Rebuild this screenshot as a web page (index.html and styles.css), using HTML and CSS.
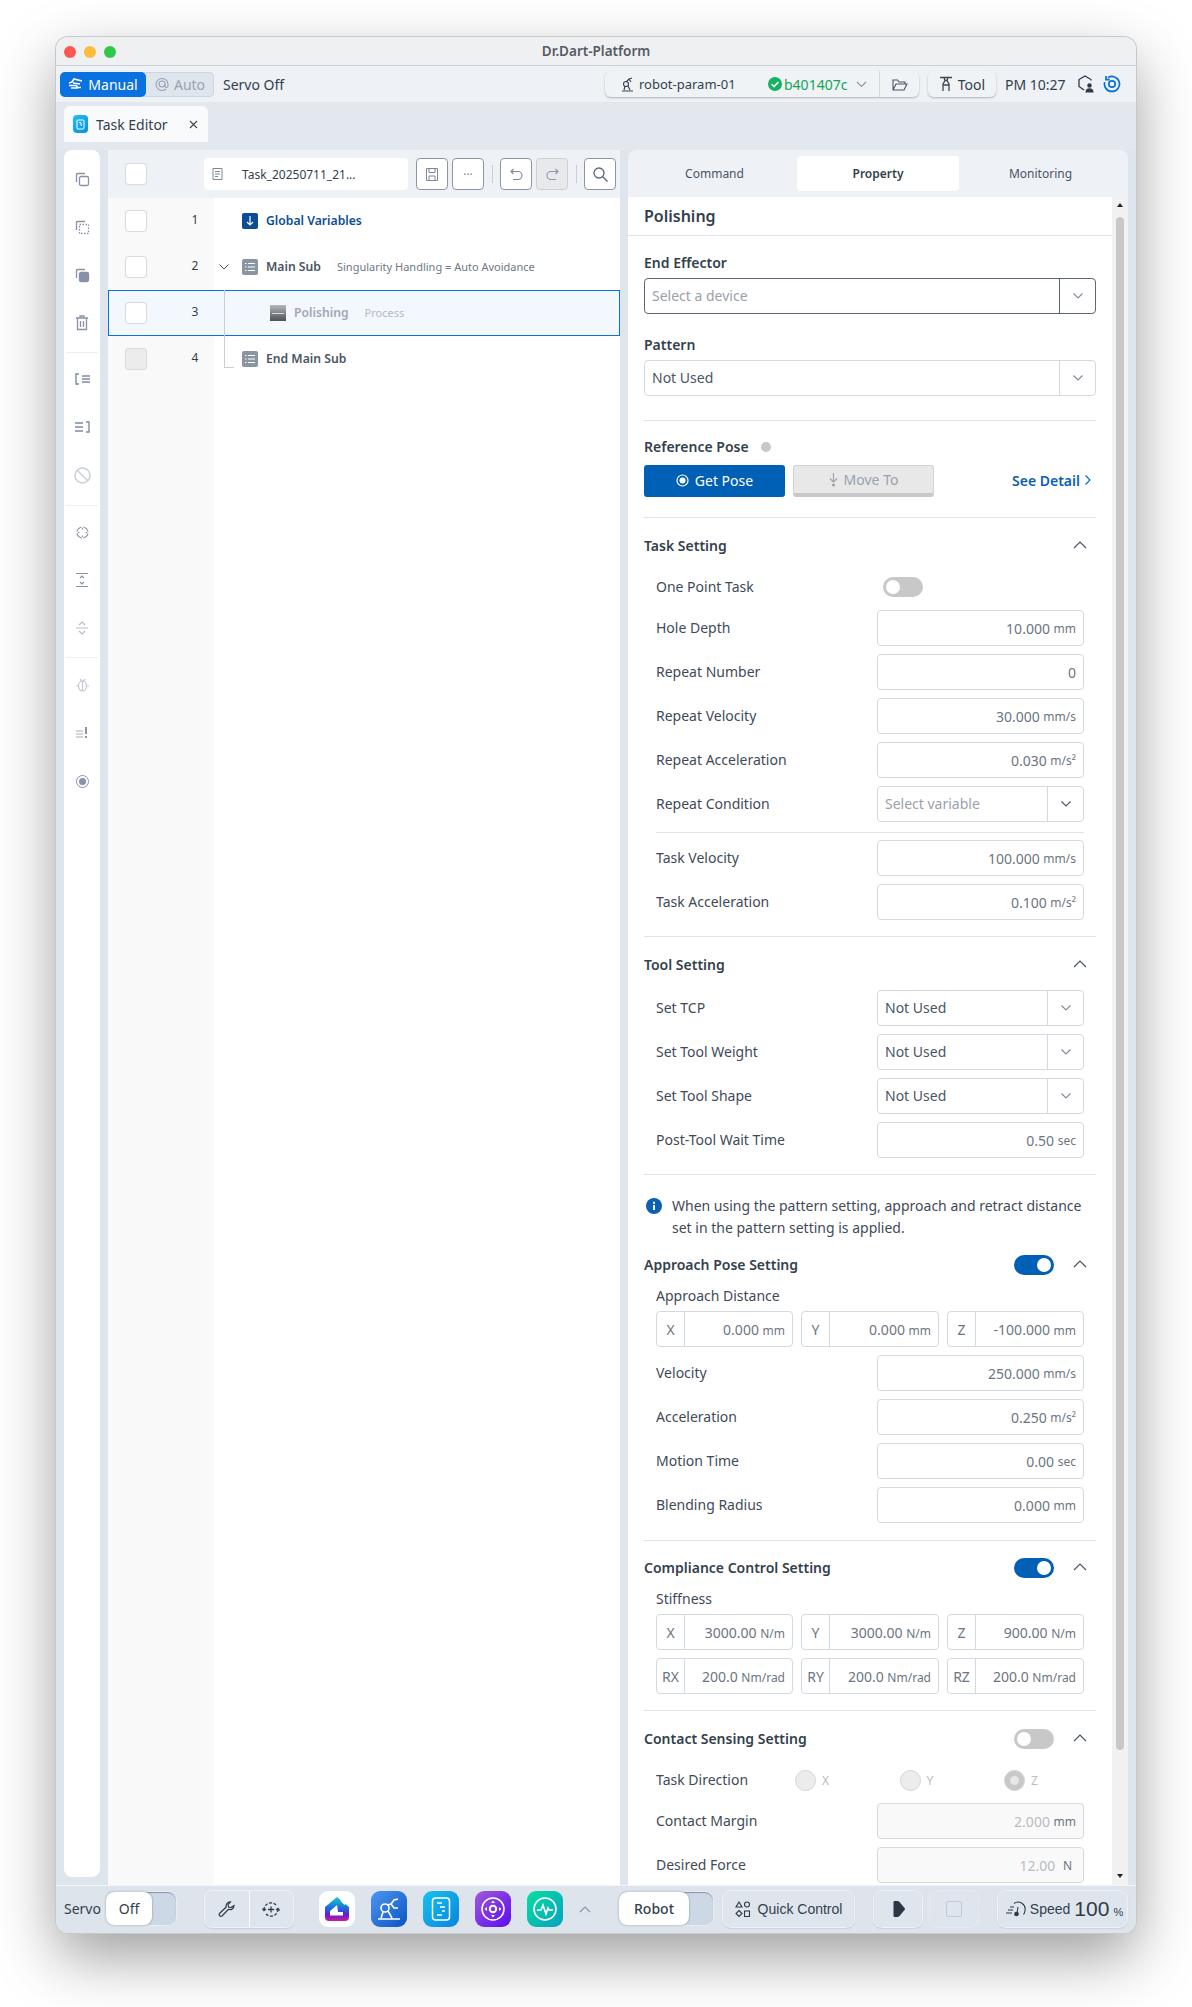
FILE: index.html
```html
<!DOCTYPE html>
<html lang="en">
<head>
  <meta charset="UTF-8">
  <title>Dr.Dart-Platform</title>
  <link rel="stylesheet" href="styles.css">
</head>
<body>
  <div class="window">
    <div class="titlebar">
      <div class="lights"><i class="red"></i><i class="yellow"></i><i class="green"></i></div>
      <span>Dr.Dart-Platform</span>
    </div>

    <div class="topbar">
      <div class="mode">
        <div class="mode-on">
          <svg width="16" height="12" viewBox="0 0 16 12" fill="none" stroke="#fff" stroke-width="1.600"><path d="M1 5l3-1 2-3 8 2M1 7.500h7l2 2h3M5 5l7 1M3 10h7"/></svg>
          Manual
        </div>
        <div class="mode-off">
          <svg width="14" height="14" viewBox="0 0 14 14" fill="none" stroke="#9aa5b4" stroke-width="1.100"><path d="M11 12a6 6 0 1 1 2-5v2a1.500 1.500 0 0 1-3 0V7"/><circle cx="7" cy="7" r="3"/></svg>
          Auto
        </div>
      </div>
      <span class="servo-state">Servo Off</span>

      <div class="robot-select">
        <div class="robot-name">
          <svg width="14" height="16" viewBox="0 0 14 16" fill="none" stroke="#3b4654" stroke-width="1.200"><circle cx="5" cy="8" r="2.500"/><path d="M5 6l3-3 3-1M8 3l2 3M4 10l-1 4M7 10l2 4M1 15h11"/></svg>
          robot-param-01
        </div>
        <div class="robot-version">
          <svg width="14" height="14" viewBox="0 0 14 14"><circle cx="7" cy="7" r="7" fill="#13b35f"/><path d="M3.600 7.200l2.400 2.400 4.400-4.600" fill="none" stroke="#fff" stroke-width="1.600"/></svg>
          b401407c
          <svg class="ver-caret" width="11" height="7" viewBox="0 0 11 7" fill="none" stroke="#8b95a3" stroke-width="1.100"><path d="M1 1l4.500 4.500L10 1"/></svg>
        </div>
        <div class="robot-folder">
          <svg width="16" height="13" viewBox="0 0 16 13" fill="none" stroke="#4a5563" stroke-width="1.100"><path d="M1 11V2h4.500l1.500 2h6v2M1 12h11l3-6H4l-3 6z"/></svg>
        </div>
      </div>
      <div class="tool-btn">
        <svg width="14" height="16" viewBox="0 0 14 16" fill="none" stroke="#3b4654" stroke-width="1.300"><path d="M1 1.500h12M5 1.500l1 3h2l1-3M6 4.500L4 8v7M8 4.500L10 8v7M4 9h6"/></svg>
        Tool
      </div>
      <span class="clock">PM 10:27</span>
      <svg class="status-shield" width="18" height="18" viewBox="0 0 18 18" fill="none" stroke="#2f3a47" stroke-width="1.300"><path d="M14 5.500V4.500L8 1 2 4.500v7L7 15"/><circle cx="12.500" cy="10.500" r="2.200" fill="#2f3a47" stroke="none"/><path d="M8.500 17.500c0-3 1.500-4.200 4-4.200s4 1.200 4 4.200z" fill="#2f3a47" stroke="none"/></svg>
      <svg width="18" height="18" viewBox="0 0 18 18" fill="none" stroke="#0a6fd8" stroke-width="1.700"><path d="M5 2.600a7.500 7.500 0 1 1-3.300 4.500M3 1v3.700h3.700"/><circle cx="9" cy="9" r="3.200"/></svg>
    </div>

    <div class="tabrow">
      <div class="doc-tab">
        <span class="doc-tab-icon">
          <svg width="9" height="11" viewBox="0 0 9 11" fill="none" stroke="#fff" stroke-width="1"><rect x="1" y="1" width="7" height="9" rx="1"/><path d="M3 3.500h2v3h1"/></svg>
        </span>
        <span class="doc-tab-name">Task Editor</span>
        <svg width="9" height="9" viewBox="0 0 9 9" stroke="#3b4654" stroke-width="1.100"><path d="M1 1l7 7M8 1L1 8"/></svg>
      </div>
    </div>

    <div class="workspace">
      <div class="sidebar">
        <div class="side-group first">
          <div class="side-icon"><svg width="15" height="15" viewBox="0 0 15 15" fill="none" stroke="#8791a8" stroke-width="1.300"><path d="M1.500 10V2.500a1 1 0 0 1 1-1H10"/><rect x="4.500" y="4.500" width="9" height="9" rx="1.500"/></svg></div>
          <div class="side-icon"><svg width="15" height="15" viewBox="0 0 15 15" fill="none" stroke="#8791a8" stroke-width="1.300"><path d="M1.500 10V2.500a1 1 0 0 1 1-1H10"/><rect x="4.500" y="4.500" width="9" height="9" stroke-dasharray="1.500 1.500"/></svg></div>
          <div class="side-icon"><svg width="15" height="15" viewBox="0 0 15 15" fill="none" stroke="#8791a8" stroke-width="1.300"><path d="M1.500 10V2.500a1 1 0 0 1 1-1H10"/><rect x="4.500" y="4.500" width="9" height="9" rx="1.500" fill="#8791a8"/></svg></div>
          <div class="side-icon"><svg width="14" height="16" viewBox="0 0 14 16" fill="none" stroke="#8791a8" stroke-width="1.300"><path d="M1 3h12M5 3V1h4v2M2.500 3v11.500h9V3M5.500 6v6M8.500 6v6"/></svg></div>
        </div>
        <div class="side-group second">
          <div class="side-icon"><svg width="15" height="12" viewBox="0 0 15 12" fill="none" stroke="#7f89a6" stroke-width="1.400"><path d="M4 1H1v10h3M7 3h8M7 6h8M7 9h8"/></svg></div>
          <div class="side-icon"><svg width="15" height="12" viewBox="0 0 15 12" fill="none" stroke="#7f89a6" stroke-width="1.400"><path d="M0 2h8M0 6h8M0 10h8M11 1h3v10h-3"/></svg></div>
          <div class="side-icon"><svg width="17" height="17" viewBox="0 0 17 17" fill="none" stroke="#c9cfdb" stroke-width="1.500"><circle cx="8.500" cy="8.500" r="7.500"/><path d="M3.200 3.200l10.600 10.600"/></svg></div>
        </div>
        <div class="side-group third">
          <div class="side-icon"><svg width="13" height="13" viewBox="0 0 13 13" fill="none" stroke="#8791a8" stroke-width="1.100"><circle cx="6.500" cy="6.500" r="5.500"/><path d="M6.500 0v3M6.500 10v3M0 6.500h3M10 6.500h3" stroke="#fff" stroke-width="1.400"/><path d="M6.500 2v1.500M6.500 9.500V11M2 6.500h1.500M9.500 6.500H11"/></svg></div>
          <div class="side-icon"><svg width="12" height="14" viewBox="0 0 12 14" fill="none" stroke="#8791a8" stroke-width="1.100"><path d="M0 .5h12M0 13.500h12M4 5l2-2 2 2M4 9l2 2 2-2"/></svg></div>
          <div class="side-icon"><svg width="12" height="14" viewBox="0 0 12 14" fill="none" stroke="#b5bcca" stroke-width="1.100"><path d="M0 7h12M3 4l3-3 3 3M3 10l3 3 3-3"/></svg></div>
        </div>
        <div class="side-group fourth">
          <div class="side-icon"><svg width="13" height="14" viewBox="0 0 13 14" fill="none" stroke="#c4cad6" stroke-width="1.200"><ellipse cx="6.500" cy="8" rx="4" ry="5"/><path d="M4 1l2.500 3L9 1M6.500 4v9M0 8h2.500M10.500 8H13"/></svg></div>
          <div class="side-icon"><svg width="12" height="12" viewBox="0 0 12 12" fill="none" stroke="#a4acbc" stroke-width="1.200"><path d="M0 4h7M0 7h7M0 10h7"/><path d="M10 0v7M10 9v2" stroke="#7f89a6" stroke-width="1.800"/></svg></div>
          <div class="side-icon"><svg width="13" height="13" viewBox="0 0 13 13"><circle cx="6.500" cy="6.500" r="6" fill="none" stroke="#8791a8"/><circle cx="6.500" cy="6.500" r="3.500" fill="#8791a8"/></svg></div>
        </div>
      </div>

      <div class="tree">
        <div class="tree-head">
          <div class="check-col"><span class="check"></span></div>
          <div class="file-field">
            <svg width="11" height="12" viewBox="0 0 11 12" fill="none" stroke="#7d8897" stroke-width="1"><path d="M1 .5h9v11H1zM3 3.500h5M3 6h5M3 8.500h3"/></svg>
            <span>Task_20250711_21...</span>
          </div>
          <span class="tool"><svg width="12" height="13" viewBox="0 0 12 13" fill="none" stroke="#7d8897" stroke-width="1"><path d="M.5.5h11v12H.5zM3 .5v4h6v-4M3 12.500V8h6v4.500"/></svg></span>
          <span class="tool dots">···</span>
          <i class="tool-sep"></i>
          <span class="tool"><svg width="13" height="13" viewBox="0 0 13 13" fill="none" stroke="#7d8897" stroke-width="1.100"><path d="M3.500 1L1 3.500 3.500 6M1 3.500h7a4 4 0 0 1 0 8H3"/></svg></span>
          <span class="tool is-off"><svg width="13" height="13" viewBox="0 0 13 13" fill="none" stroke="#8d97a5" stroke-width="1.100"><path d="M9.500 1L12 3.500 9.500 6M12 3.500H5a4 4 0 0 0 0 8h5"/></svg></span>
          <i class="tool-sep"></i>
          <span class="tool"><svg width="15" height="15" viewBox="0 0 15 15" fill="none" stroke="#5b6676" stroke-width="1.300"><circle cx="6" cy="6" r="5"/><path d="M9.800 9.800L14.500 14.500"/></svg></span>
        </div>

        <div class="tree-body">
          <div class="tree-row">
            <div class="check-col"><span class="check"></span><b class="num">1</b></div>
            <div class="step step-top">
              <span class="step-icon blue"><svg width="8" height="10" viewBox="0 0 8 10" fill="none" stroke="#fff" stroke-width="1.200"><path d="M4 0v9M1 6l3 3 3-3"/></svg></span>
              <span class="step-name global">Global Variables</span>
            </div>
          </div>
          <div class="tree-row">
            <div class="check-col"><span class="check"></span><b class="num">2</b></div>
            <div class="step step-top">
              <svg class="step-caret" width="10" height="6" viewBox="0 0 10 6" fill="none" stroke="#4a5563" stroke-width="1"><path d="M.5.5L5 5 9.500.5"/></svg>
              <span class="step-icon grey"><svg width="10" height="10" viewBox="0 0 10 10" fill="none" stroke="#fff"><path d="M0 1.500h1.500M3 1.500h7M0 5h1.500M3 5h7M0 8.500h1.500M3 8.500h7"/></svg></span>
              <span class="step-name">Main Sub</span>
              <span class="step-note">Singularity Handling = Auto Avoidance</span>
            </div>
          </div>
          <div class="tree-row is-selected">
            <div class="check-col"><span class="check"></span><b class="num">3</b></div>
            <div class="step step-child">
              <span class="step-icon process"></span>
              <span class="step-name muted">Polishing</span>
              <span class="step-note light">Process</span>
            </div>
          </div>
          <div class="tree-row">
            <div class="check-col"><span class="check off"></span><b class="num">4</b></div>
            <div class="step step-top step-end">
              <span class="step-icon grey"><svg width="10" height="10" viewBox="0 0 10 10" fill="none" stroke="#fff"><path d="M0 1.500h1.500M3 1.500h7M0 5h1.500M3 5h7M0 8.500h1.500M3 8.500h7"/></svg></span>
              <span class="step-name">End Main Sub</span>
            </div>
          </div>
          <div class="tree-rest"><div class="check-col"></div></div>
        </div>
      </div>

      <div class="panel">
        <div class="panel-tabs">
          <div class="panel-tab tab-command">Command</div>
          <div class="panel-tab active">Property</div>
          <div class="panel-tab tab-monitor">Monitoring</div>
        </div>
        <div class="panel-main">
          <div class="props">
            <h2 class="props-title">Polishing</h2>
            <div class="props-body">
              <div class="field-label first">End Effector</div>
              <div class="select strong"><span class="placeholder">Select a device</span><span class="select-btn"><svg width="10" height="6" viewBox="0 0 10 6" fill="none" stroke="#7d8897" stroke-width="1.100"><path d="M.5.5L5 5 9.500.5"/></svg></span></div>
              <div class="field-label">Pattern</div>
              <div class="select"><span>Not Used</span><span class="select-btn"><svg width="10" height="6" viewBox="0 0 10 6" fill="none" stroke="#7d8897" stroke-width="1.100"><path d="M.5.5L5 5 9.500.5"/></svg></span></div>
              <hr class="rule rule-pattern">

              <div class="pose-head">Reference Pose <i class="pose-dot"></i></div>
              <div class="pose-actions">
                <button class="btn-primary">
                  <svg width="13" height="13" viewBox="0 0 13 13"><circle cx="6.500" cy="6.500" r="5.500" fill="none" stroke="#fff" stroke-width="1.200"/><circle cx="6.500" cy="6.500" r="3" fill="#fff"/></svg>
                  Get Pose
                </button>
                <button class="btn-disabled">
                  <svg width="9" height="14" viewBox="0 0 9 14" fill="none" stroke="#98a1b0" stroke-width="1.100"><path d="M4.500 0v8M1 5.500L4.500 9 8 5.500"/><circle cx="4.500" cy="12" r="1.500" fill="#98a1b0" stroke="none"/></svg>
                  Move To
                </button>
                <a class="see-detail">See Detail <svg width="6" height="10" viewBox="0 0 6 10" fill="none" stroke="#0b5fb5" stroke-width="1.100"><path d="M.5.5L5 5 .5 9.500"/></svg></a>
              </div>
              <hr class="rule rule-pose">

              <div class="section-head head-task"><span>Task Setting</span><svg class="collapse" width="14" height="8" viewBox="0 0 14 8" fill="none" stroke="#4a5563" stroke-width="1.200"><path d="M1 7l6-6 6 6"/></svg></div>
              <div class="rows">
                <div class="row row-switch"><label>One Point Task</label><span class="switch"></span></div>
                <div class="row"><label>Hole Depth</label><div class="num-input">10.000 <small>mm</small></div></div>
                <div class="row"><label>Repeat Number</label><div class="num-input">0</div></div>
                <div class="row"><label>Repeat Velocity</label><div class="num-input">30.000 <small>mm/s</small></div></div>
                <div class="row"><label>Repeat Acceleration</label><div class="num-input">0.030 <small>m/s²</small></div></div>
                <div class="row"><label>Repeat Condition</label><div class="select short"><span class="placeholder">Select variable</span><span class="select-btn"><svg width="10" height="6" viewBox="0 0 10 6" fill="none" stroke="#4a5563" stroke-width="1.100"><path d="M.5.5L5 5 9.500.5"/></svg></span></div></div>
                <hr class="rule inner">
                <div class="row"><label>Task Velocity</label><div class="num-input">100.000 <small>mm/s</small></div></div>
                <div class="row"><label>Task Acceleration</label><div class="num-input">0.100 <small>m/s²</small></div></div>
              </div>
              <hr class="rule rule-task">

              <div class="section-head head-tool"><span>Tool Setting</span><svg class="collapse" width="14" height="8" viewBox="0 0 14 8" fill="none" stroke="#4a5563" stroke-width="1.200"><path d="M1 7l6-6 6 6"/></svg></div>
              <div class="rows">
                <div class="row"><label>Set TCP</label><div class="select short"><span>Not Used</span><span class="select-btn"><svg width="10" height="6" viewBox="0 0 10 6" fill="none" stroke="#7d8897" stroke-width="1.100"><path d="M.5.5L5 5 9.500.5"/></svg></span></div></div>
                <div class="row"><label>Set Tool Weight</label><div class="select short"><span>Not Used</span><span class="select-btn"><svg width="10" height="6" viewBox="0 0 10 6" fill="none" stroke="#7d8897" stroke-width="1.100"><path d="M.5.5L5 5 9.500.5"/></svg></span></div></div>
                <div class="row"><label>Set Tool Shape</label><div class="select short"><span>Not Used</span><span class="select-btn"><svg width="10" height="6" viewBox="0 0 10 6" fill="none" stroke="#7d8897" stroke-width="1.100"><path d="M.5.5L5 5 9.500.5"/></svg></span></div></div>
                <div class="row"><label>Post-Tool Wait Time</label><div class="num-input">0.50 <small>sec</small></div></div>
              </div>
              <hr class="rule rule-tool">

              <div class="info-note">
                <svg width="16" height="16" viewBox="0 0 16 16"><circle cx="8" cy="8" r="8" fill="#0b5fb5"/><rect x="7" y="7" width="2" height="5" fill="#fff"/><rect x="7" y="3.800" width="2" height="2" fill="#fff"/></svg>
                <p>When using the pattern setting, approach and retract distance set in the pattern setting is applied.</p>
              </div>

              <div class="section-head head-approach"><span>Approach Pose Setting</span><span class="switch on"></span><svg class="collapse" width="14" height="8" viewBox="0 0 14 8" fill="none" stroke="#4a5563" stroke-width="1.200"><path d="M1 7l6-6 6 6"/></svg></div>
              <div class="rows">
                <div class="sub-label">Approach Distance</div>
                <div class="axis-grid">
                  <div class="axis"><b>X</b><span>0.000 <small>mm</small></span></div>
                  <div class="axis"><b>Y</b><span>0.000 <small>mm</small></span></div>
                  <div class="axis"><b>Z</b><span>-100.000 <small>mm</small></span></div>
                </div>
                <div class="row"><label>Velocity</label><div class="num-input">250.000 <small>mm/s</small></div></div>
                <div class="row"><label>Acceleration</label><div class="num-input">0.250 <small>m/s²</small></div></div>
                <div class="row"><label>Motion Time</label><div class="num-input">0.00 <small>sec</small></div></div>
                <div class="row"><label>Blending Radius</label><div class="num-input">0.000 <small>mm</small></div></div>
              </div>
              <hr class="rule rule-approach">

              <div class="section-head head-compliance"><span>Compliance Control Setting</span><span class="switch on"></span><svg class="collapse" width="14" height="8" viewBox="0 0 14 8" fill="none" stroke="#4a5563" stroke-width="1.200"><path d="M1 7l6-6 6 6"/></svg></div>
              <div class="rows">
                <div class="sub-label">Stiffness</div>
                <div class="axis-grid">
                  <div class="axis"><b>X</b><span>3000.00 <small>N/m</small></span></div>
                  <div class="axis"><b>Y</b><span>3000.00 <small>N/m</small></span></div>
                  <div class="axis"><b>Z</b><span>900.00 <small>N/m</small></span></div>
                  <div class="axis"><b>RX</b><span>200.0 <small>Nm/rad</small></span></div>
                  <div class="axis"><b>RY</b><span>200.0 <small>Nm/rad</small></span></div>
                  <div class="axis"><b>RZ</b><span>200.0 <small>Nm/rad</small></span></div>
                </div>
              </div>
              <hr class="rule rule-compliance">

              <div class="section-head head-contact"><span>Contact Sensing Setting</span><span class="switch"></span><svg class="collapse" width="14" height="8" viewBox="0 0 14 8" fill="none" stroke="#4a5563" stroke-width="1.200"><path d="M1 7l6-6 6 6"/></svg></div>
              <div class="rows">
                <div class="row row-radio">
                  <label>Task Direction</label>
                  <div class="radios">
                    <span class="radio"><i></i>X</span>
                    <span class="radio"><i></i>Y</span>
                    <span class="radio"><i class="checked"></i>Z</span>
                  </div>
                </div>
                <div class="row"><label>Contact Margin</label><div class="num-input off">2.000 <small>mm</small></div></div>
                <div class="row"><label>Desired Force</label><div class="num-input off">12.00 <small class="unit-n">N</small></div></div>
              </div>
            </div>
          </div>
          <div class="scrollbar">
            <i class="arrow-up"></i>
            <div class="scroll-thumb"></div>
            <i class="arrow-down"></i>
          </div>
        </div>
      </div>
    </div>

    <div class="bottombar">
      <span class="servo-label">Servo</span>
      <div class="slide-toggle servo-toggle"><span>Off</span></div>
      <div class="btn-pair">
        <span><svg width="17" height="17" viewBox="0 0 17 17" fill="none" stroke="#2f3a47" stroke-width="1.200"><path d="M16 4.500a4 4 0 0 1-5.500 3.800L4 15a1.800 1.800 0 0 1-2.500-2.500l6.700-6.500A4 4 0 0 1 12.500 1L10 3.500l.5 2.500 2.500.5z"/></svg></span>
        <span><svg width="18" height="17" viewBox="0 0 18 17" fill="none" stroke="#2f3a47" stroke-width="1.300"><path d="M2 9a7 7 0 0 1 12-5" stroke-dasharray="3 1.500"/><path d="M16 8a7 7 0 0 1-12 5" stroke-dasharray="3 1.500"/><path d="M6 8.500h6M9 5.500v6M.5 7.500L2 9.500l2-1.500M17.500 9.500L16 7.500l-2 1.500"/></svg></span>
      </div>
      <div class="dock">
        <span class="app app-home"><svg width="26" height="26" viewBox="0 0 26 26"><defs><linearGradient id="homeFill" x1="0" y1="0" x2="0" y2="1"><stop offset="0" stop-color="#17cdc8"/><stop offset=".45" stop-color="#1a6fe0"/><stop offset=".72" stop-color="#5a22d0"/><stop offset="1" stop-color="#d2189a"/></linearGradient></defs><path d="M13 1L25 11v10a4 4 0 0 1-4 4H5a4 4 0 0 1-4-4V11z" fill="url(#homeFill)"/><path d="M13 9l-7 6v4.500h13V16H14v-.5z" fill="#fff"/><path d="M16.500 5l1.500-1.500 4 4L20.500 9z" fill="#fff"/></svg></span>
        <span class="app app-robot"><svg width="24" height="24" viewBox="0 0 24 24" fill="none" stroke="#fff" stroke-width="1.600"><circle cx="8" cy="11" r="4"/><path d="M10 8l4-1 3-4 4-1M14 7l3 4 4 0M6 15l-2 6M11 14l4 7M1 22h22"/></svg></span>
        <span class="app app-task"><svg width="20" height="24" viewBox="0 0 20 24" fill="none" stroke="#fff" stroke-width="1.500"><rect x="1.500" y="1" width="17" height="22" rx="3"/><path d="M6 6h5M9 10h5M11 14h3M6 18h5"/></svg></span>
        <span class="app app-jog"><svg width="26" height="26" viewBox="0 0 26 26" fill="none" stroke="#fff" stroke-width="1.500"><circle cx="13" cy="13" r="11"/><circle cx="13" cy="13" r="3.200" stroke-width="2"/><path d="M13 4.500l-2 2.500h4zM13 21.500l-2-2.500h4zM4.500 13l2.500-2v4zM21.500 13L19 11v4z" fill="#fff" stroke="none"/></svg></span>
        <span class="app app-monitor"><svg width="26" height="26" viewBox="0 0 26 26" fill="none" stroke="#fff" stroke-width="1.600"><circle cx="13" cy="13" r="11"/><path d="M5 14h4l2-5 3 9 2-6 1 2h4"/></svg></span>
      </div>
      <svg class="dock-caret" width="12" height="7" viewBox="0 0 12 7" fill="none" stroke="#8b95a3" stroke-width="1.200"><path d="M1 6l5-5 5 5"/></svg>
      <div class="slide-toggle robot-toggle"><span>Robot</span></div>
      <div class="bar-btn quick">
        <svg width="16" height="16" viewBox="0 0 16 16" fill="none" stroke="#2f3a47" stroke-width="1.100"><path d="M4 1l3 5H1zM4 9.500L7 12.500 4 15.500 1 12.500z"/><circle cx="12" cy="3.500" r="2.500"/><rect x="9.500" y="10" width="5" height="5.500"/></svg>
        Quick Control
      </div>
      <div class="bar-btn play"><svg width="12" height="18" viewBox="0 0 12 18"><path d="M1.500 1h3q1 0 2 1l5 6q1 1 0 2l-5 6q-1 1-2 1h-3q-1 0-1-1V2q0-1 1-1z" fill="#2b3746"/></svg></div>
      <div class="bar-btn stop"><i></i></div>
      <div class="bar-btn speed">
        <svg width="20" height="16" viewBox="0 0 20 16" fill="none" stroke="#2f3a47" stroke-width="1.100"><path d="M8 2.500a7 7 0 0 1 11 7 7 7 0 0 1-1.500 4M4 6h4M2 9h5M0 12h6M12 6l-1 6"/><circle cx="10.500" cy="13" r="1.800" fill="#2f3a47"/></svg>
        <span class="speed-label">Speed</span>
        <span class="speed-value">100</span>
        <small>%</small>
      </div>
    </div>
  </div>
</body>
</html>
```

FILE: styles.css
```css
* {
  box-sizing: border-box;
}
html, body {
  margin: 0;
  height: 100%;
  background: #fff;
}
body {
  padding: 37px 56px 0;
  font-family: "Noto Sans", sans-serif;
  font-size: 14px;
  color: #333f4d;
  overflow: hidden;
}
svg {
  flex: none;
  display: block;
}
hr {
  border: none;
  margin: 0;
}

.window {
  width: 1080px;
  height: 1896px;
  border-radius: 12px;
  overflow: hidden;
  background: #e3e8ee;
  box-shadow: 0 0 0 1px #c6c9cc, 0 24px 60px rgba(0,0,0,0.38);
  display: flex;
  flex-direction: column;
}

.titlebar {
  height: 29px;
  background: #eff0f2;
  border-bottom: 1px solid #cdd0d3;
  position: relative;
  display: flex;
  align-items: center;
  justify-content: center;
  font-size: 13.500px;
  font-weight: 600;
  color: #555b63;
}
.lights {
  position: absolute;
  left: 8px;
  top: 9px;
  display: flex;
  gap: 8px;
}
.lights i {
  width: 12px;
  height: 12px;
  border-radius: 50%;
}
.red { background: #fc5753; }
.yellow { background: #fdbc40; }
.green { background: #33c748; }

.topbar {
  height: 36px;
  background: #eef1f5;
  display: flex;
  align-items: center;
  padding: 0 0 0 4px;
  font-size: 14px;
}
.mode {
  width: 154px;
  height: 25px;
  background: #dfe5ec;
  border-radius: 5px;
  box-shadow: inset 0 0 0 1px #ccd4de;
  display: flex;
}
.mode-on {
  width: 86px;
  background: #0a71e0;
  color: #fff;
  border-radius: 5px;
  display: flex;
  align-items: center;
  justify-content: center;
  gap: 4px;
}
.mode-off {
  flex: 1;
  color: #98a3b2;
  display: flex;
  align-items: center;
  justify-content: center;
  gap: 5px;
}
.servo-state {
  margin-left: 9px;
  width: 382px;
}
.robot-select {
  width: 314px;
  height: 26px;
  background: #f0f3f6;
  border-radius: 6px;
  box-shadow: 0 1px 2px rgba(60,70,90,0.35);
  display: flex;
  align-items: center;
}
.robot-name {
  width: 163px;
  padding-left: 16px;
  display: flex;
  align-items: center;
  gap: 4px;
  font-size: 13px;
}
.robot-version {
  width: 111px;
  color: #13a45a;
  display: flex;
  align-items: center;
  gap: 2px;
}
.ver-caret {
  margin-left: 7px;
}
.robot-folder {
  flex: 1;
  height: 26px;
  border-left: 1px solid #d3d9e0;
  display: flex;
  align-items: center;
  justify-content: center;
}
.tool-btn {
  margin-left: 9px;
  width: 68px;
  height: 26px;
  background: #f0f3f6;
  border-radius: 6px;
  box-shadow: 0 1px 2px rgba(60,70,90,0.35);
  display: flex;
  align-items: center;
  justify-content: center;
  gap: 5px;
}
.clock {
  margin-left: 9px;
  width: 72px;
}
.status-shield {
  margin-right: 8px;
}

.tabrow {
  height: 48px;
  padding: 4px 0 0 8px;
  background: #e3e8ee;
}
.doc-tab {
  width: 144px;
  height: 36px;
  background: #f9fafb;
  border-radius: 6px 6px 0 0;
  display: flex;
  align-items: center;
  padding: 0 10px 0 9px;
}
.doc-tab-icon {
  width: 15px;
  height: 18px;
  border-radius: 4px;
  background: linear-gradient(135deg, #1dc4ea, #0a8ce8);
  display: flex;
  align-items: center;
  justify-content: center;
  margin-right: 8px;
}
.doc-tab-name {
  flex: 1;
}

.workspace {
  height: 1735px;
  display: flex;
  padding: 0 8px;
  background: #dfe5ec;
}
.sidebar {
  width: 36px;
  height: 1727px;
  background: #fff;
  border-radius: 8px;
  margin-right: 8px;
  padding: 0 2px;
}
.side-group {
  border-bottom: 1px solid #eceef1;
}
.side-group.first { height: 203px; padding-top: 5px; }
.side-group.second { height: 153px; padding-top: 2px; }
.side-group.third { height: 152px; padding-top: 2px; }
.side-group.fourth { padding-top: 3px; border-bottom: none; }
.side-icon {
  height: 48px;
  display: flex;
  align-items: center;
  justify-content: center;
}

.tree {
  width: 512px;
  display: flex;
  flex-direction: column;
  background: #fff;
}
.tree-head {
  height: 48px;
  background: #eef1f5;
  display: flex;
  align-items: center;
}
.check-col {
  width: 106px;
  flex: none;
  align-self: stretch;
  padding-left: 17px;
  display: flex;
  align-items: center;
  position: relative;
}
.tree-head .check-col {
  width: 96px;
}
.check {
  width: 22px;
  height: 22px;
  border-radius: 4px;
  background: #fff;
  border: 1px solid #d9dde2;
  box-shadow: 0 0 1px rgba(0,0,0,0.1);
}
.check.off {
  background: #ececec;
}
.num {
  font-weight: 400;
  font-size: 12px;
  position: absolute;
  left: 82px;
  top: 13px;
  width: 10px;
  text-align: center;
}
.file-field {
  width: 204px;
  height: 32px;
  background: #fff;
  border-radius: 4px;
  display: flex;
  align-items: center;
  padding-left: 8px;
  font-size: 12px;
  gap: 19px;
  margin-right: 8px;
}
.tool {
  width: 32px;
  height: 32px;
  border: 1px solid #8c97a5;
  border-radius: 4px;
  background: #fff;
  margin-right: 4px;
  display: flex;
  align-items: center;
  justify-content: center;
}
.tool.is-off {
  background: #e8e9eb;
  border-color: #ccd0d5;
}
.dots {
  font-size: 12px;
  color: #7d8897;
}
.tool-sep {
  width: 1px;
  height: 18px;
  background: #c8ced6;
  margin: 0 7px 0 4px;
}
.tree-body {
  flex: 1;
  display: flex;
  flex-direction: column;
}
.tree-row {
  height: 46px;
  display: flex;
  background: #fff;
}
.tree-row .check-col {
  background: #f9f9f9;
}
.tree-row.is-selected {
  background: #f2f8fe;
  box-shadow: inset 0 0 0 1px #0a71e0;
}
.tree-row.is-selected .check-col {
  background: transparent;
}
.tree-rest {
  flex: 1;
  display: flex;
}
.tree-rest .check-col {
  background: #f9f9f9;
}
.step {
  flex: 1;
  display: flex;
  align-items: center;
  position: relative;
  font-size: 12.200px;
}
.step-top {
  padding-left: 28px;
}
.step-child {
  padding-left: 56px;
}
.step-child::before {
  content: "";
  position: absolute;
  left: 10px;
  top: 0;
  bottom: 0;
  width: 1px;
  background: #c9ced5;
}
.step-end::before {
  content: "";
  position: absolute;
  left: 10px;
  top: 0;
  height: 31px;
  width: 9px;
  border-left: 1px solid #c9ced5;
  border-bottom: 1px solid #c9ced5;
}
.step-caret {
  position: absolute;
  left: 5px;
  top: 20px;
}
.step-icon {
  width: 16px;
  height: 16px;
  border-radius: 2px;
  display: flex;
  align-items: center;
  justify-content: center;
  margin-right: 8px;
}
.step-icon.blue { background: #0a4d96; }
.step-icon.grey { background: #8a95a3; }
.step-icon.process {
  border-radius: 0;
  background: linear-gradient(180deg, #b4b7bc 0%, #4e5156 100%);
}
.step-icon.process::after {
  content: "";
  width: 12px;
  height: 1px;
  background: rgba(255,255,255,0.7);
}
.step-name {
  font-weight: 600;
  color: #4a5563;
  margin-top: -2px;
}
.step-name.global { color: #0a4d96; }
.step-name.muted { color: #a2a8b0; }
.step-note {
  font-size: 11px;
  color: #6e7884;
  margin: -2px 0 0 16px;
}
.step-note.light { color: #b5bac1; }

.panel {
  width: 500px;
  margin-left: 8px;
  display: flex;
  flex-direction: column;
  background: #eef1f5;
  border-radius: 8px 8px 0 0;
  overflow: hidden;
}
.panel-tabs {
  height: 47px;
  padding-top: 6px;
  display: flex;
  font-size: 12px;
}
.panel-tab {
  width: 169px;
  height: 35px;
  display: flex;
  align-items: center;
  justify-content: center;
  color: #4a5563;
}
.tab-command { padding-left: 4px; }
.tab-monitor { padding-right: 6px; }
.panel-tab.active {
  width: 162px;
  background: #fff;
  border-radius: 4px;
  font-weight: 600;
  color: #333f4d;
}
.panel-main {
  flex: 1;
  display: flex;
  min-height: 0;
}
.props {
  width: 484px;
  background: #fff;
  overflow: hidden;
}
.props-title {
  margin: 0;
  height: 39px;
  padding-left: 16px;
  font-size: 16px;
  font-weight: 600;
  line-height: 38px;
  border-bottom: 1px solid #e1e4e8;
}
.props-body {
  padding: 0 16px;
}
.field-label {
  font-weight: 600;
  height: 20px;
  line-height: 20px;
  margin: 21px 0 5px;
}
.field-label.first {
  margin-top: 17px;
}
.select {
  height: 36px;
  border: 1px solid #d4d9df;
  border-radius: 4px;
  display: flex;
  align-items: center;
  background: #fff;
  color: #4a5563;
  padding-left: 7px;
}
.select span:first-child {
  flex: 1;
  margin-top: -1px;
}
.select.strong {
  border-color: #5b6676;
}
.select.short {
  width: 207px;
  margin-left: auto;
}
.placeholder {
  color: #9aa1ab;
}
.select-btn {
  width: 36px;
  height: 100%;
  border-left: 1px solid #d4d9df;
  display: flex;
  align-items: center;
  justify-content: center;
}
.select.strong .select-btn {
  border-color: #5b6676;
}
.rule {
  height: 1px;
  background: #e1e4e8;
}
.rule-pattern { margin-top: 24px; }
.pose-head {
  font-weight: 600;
  margin-top: 16px;
  height: 20px;
  line-height: 20px;
  display: flex;
  align-items: center;
  gap: 12px;
}
.pose-dot {
  width: 10px;
  height: 10px;
  border-radius: 50%;
  background: #c8c8c8;
}
.pose-actions {
  display: flex;
  align-items: center;
  margin-top: 8px;
  gap: 8px;
}
.pose-actions button {
  width: 141px;
  height: 32px;
  border: none;
  border-radius: 3px;
  font-family: inherit;
  font-size: 14px;
  display: flex;
  align-items: center;
  justify-content: center;
  gap: 6px;
  padding: 0;
}
.pose-actions .btn-primary {
  background: #0060b6;
  color: #fff;
  padding-bottom: 2px;
}
.pose-actions .btn-disabled {
  background: #e8e8e8;
  color: #98a1b0;
  border: 1px solid #d2d2d2;
  border-bottom: 4px solid #c8c8c8;
}
.see-detail {
  margin: -2px 5px 0 auto;
  font-weight: 600;
  color: #0b5fb5;
  display: flex;
  align-items: center;
  gap: 5px;
}
.rule-pose { margin-top: 20px; }
.section-head {
  height: 20px;
  display: flex;
  align-items: center;
  font-weight: 600;
}
.section-head > span:first-child {
  flex: 1;
  margin-top: -2px;
}
.collapse {
  margin: -2px 9px 0 19px;
}
.head-task { margin-top: 18px; }
.head-task .collapse, .head-tool .collapse { margin-left: 0; }
.rows {
  padding: 0 12px;
}
.row {
  height: 36px;
  margin-bottom: 8px;
  display: flex;
  align-items: center;
  justify-content: space-between;
  color: #3f4a58;
}
.row label {
  margin-top: -1px;
}
.row-switch {
  height: 20px;
  margin: 21px 0 13px;
}
.switch {
  width: 40px;
  height: 20px;
  border-radius: 10px;
  background: #c8c8c8;
  position: relative;
  flex: none;
}
.switch::after {
  content: "";
  position: absolute;
  top: 3px;
  left: 3px;
  width: 14px;
  height: 14px;
  border-radius: 50%;
  background: #fff;
}
.switch.on {
  background: #0060b6;
}
.switch.on::after {
  left: 23px;
}
.row-switch .switch {
  margin-right: 161px;
}
.num-input {
  width: 207px;
  height: 36px;
  border: 1px solid #d4d9df;
  border-radius: 4px;
  display: flex;
  align-items: center;
  justify-content: flex-end;
  padding-right: 7px;
  color: #6c7582;
  white-space: pre;
}
.num-input small, .axis small {
  font-size: 12px;
  color: #6c7582;
}
.num-input.off {
  background: #f9f9f9;
  color: #b8bcc2;
}
.unit-n {
  margin: 0 4px;
}
.rule.inner {
  margin: 10px 0 7px;
}
.rule-task { margin-top: 16px; }
.head-tool { margin: 18px 0 15px; }
.rule-tool { margin-top: 16px; }
.info-note {
  display: flex;
  gap: 10px;
  margin: 20px 0 0 2px;
  line-height: 22px;
  color: #3f4a58;
}
.info-note svg {
  margin-top: 3px;
}
.info-note p {
  margin: 0;
}
.head-approach { margin-top: 16px; }
.sub-label {
  color: #3f4a58;
  height: 20px;
  line-height: 20px;
  margin: 11px 0 5px;
}
.axis-grid {
  display: grid;
  grid-template-columns: 137px 138px 137px;
  gap: 8px;
  margin-bottom: 8px;
}
.axis {
  height: 36px;
  border: 1px solid #d4d9df;
  border-radius: 4px;
  display: flex;
  align-items: center;
}
.axis b {
  width: 28px;
  height: 100%;
  border-right: 1px solid #d4d9df;
  font-weight: 400;
  color: #6c7582;
  display: flex;
  align-items: center;
  justify-content: center;
}
.axis span {
  flex: 1;
  text-align: right;
  padding-right: 7px;
  color: #6c7582;
}
.rule-approach { margin-top: 17px; }
.head-compliance { margin-top: 17px; }
.rule-compliance { margin-top: 16px; }
.head-contact { margin-top: 18px; }
.head-contact + .rows {
  margin-top: 18px;
}
.row-radio {
  height: 26px;
  margin-bottom: 10px;
}
.radios {
  width: 289px;
  display: flex;
}
.radio {
  flex: none;
  width: 104.500px;
  display: flex;
  align-items: center;
  gap: 6px;
  font-size: 12px;
  color: #b8bcc2;
}
.radio i {
  width: 21px;
  height: 21px;
  border-radius: 50%;
  background: #ececec;
  border: 1px solid #d4d4d4;
  display: flex;
  align-items: center;
  justify-content: center;
}
.radio i.checked {
  background: #c8c8c8;
}
.radio i.checked::after {
  content: "";
  width: 9px;
  height: 9px;
  border-radius: 50%;
  background: #e6e6e6;
}
.scrollbar {
  width: 16px;
  background: #f1f1f1;
  position: relative;
}
.scroll-thumb {
  position: absolute;
  left: 4px;
  top: 20px;
  width: 8px;
  height: 1533px;
  border-radius: 4px;
  background: #c8c8c8;
}
.arrow-up, .arrow-down {
  position: absolute;
  left: 5px;
  width: 0;
  height: 0;
  border-left: 3px solid transparent;
  border-right: 3px solid transparent;
}
.arrow-up {
  top: 6px;
  border-bottom: 4px solid #222;
}
.arrow-down {
  bottom: 7px;
  border-top: 4px solid #222;
}

.bottombar {
  flex: 1;
  background: #dde4ec;
  border-top: 1px solid #f2f4f7;
  display: flex;
  align-items: flex-start;
  padding: 5px 0 0 8px;
}
.servo-label {
  width: 41px;
  height: 36px;
  line-height: 36px;
  color: #333f4d;
}
.slide-toggle {
  height: 35px;
  background: #ccd8e5;
  border-radius: 9px;
  border: 1px solid #e9edf2;
  box-shadow: inset 0 1px 1px rgba(70,80,100,0.5);
  flex: none;
}
.slide-toggle span {
  display: flex;
  align-items: center;
  justify-content: center;
  height: 33px;
  background: #fff;
  border-radius: 8px;
  box-shadow: 0 0 2px rgba(50,60,80,0.6);
}
.servo-toggle {
  width: 72px;
}
.servo-toggle span {
  width: 46px;
}
.btn-pair {
  margin-left: 28px;
  width: 88px;
  height: 36px;
  border-radius: 7px;
  background: #dfe5ec;
  box-shadow: 0 0 0 1px #edf0f4, 0 1px 2px rgba(60,70,90,0.4);
  display: flex;
}
.btn-pair span {
  flex: 1;
  display: flex;
  align-items: center;
  justify-content: center;
}
.btn-pair span:first-child {
  border-right: 1px solid #fff;
}
.dock {
  margin-left: 26px;
  display: flex;
  gap: 16px;
}
.app {
  width: 36px;
  height: 36px;
  border-radius: 9px;
  display: flex;
  align-items: center;
  justify-content: center;
}
.app-home { background: #fff; }
.app-robot { background: linear-gradient(135deg, #4f95f0, #0a55c4); }
.app-task { background: linear-gradient(135deg, #17c2ee, #0a84e0); }
.app-jog { background: linear-gradient(135deg, #a25ad8, #5a0af0); }
.app-monitor { background: linear-gradient(135deg, #05e0a0, #08a0c0); }
.dock-caret {
  margin: 15px 27px 0 16px;
}
.robot-toggle {
  width: 96px;
  margin-right: 9px;
}
.robot-toggle span {
  width: 70px;
  font-weight: 500;
}
.bar-btn {
  height: 36px;
  border-radius: 8px;
  background: #dfe5ec;
  box-shadow: 0 0 0 1px #edf0f4, 0 1px 2px rgba(60,70,90,0.35);
  display: flex;
  align-items: center;
  justify-content: center;
  font-family: "Liberation Sans", sans-serif;
}
.quick {
  width: 131px;
  gap: 7px;
  margin-right: 20px;
}
.play {
  width: 48px;
  margin-right: 8px;
  padding-left: 2px;
}
.stop {
  width: 48px;
  margin-right: 20px;
  box-shadow: 0 0 0 1px #e6eaef;
}
.stop i {
  width: 16px;
  height: 16px;
  border: 1px solid #c3c9d6;
  border-radius: 2px;
}
.speed {
  width: 129px;
  padding-left: 4px;
  gap: 4px;
}
.speed-value {
  font-size: 21px;
  color: #2f3a47;
}
.speed small {
  font-size: 11px;
  margin-top: 6px;
}
```
